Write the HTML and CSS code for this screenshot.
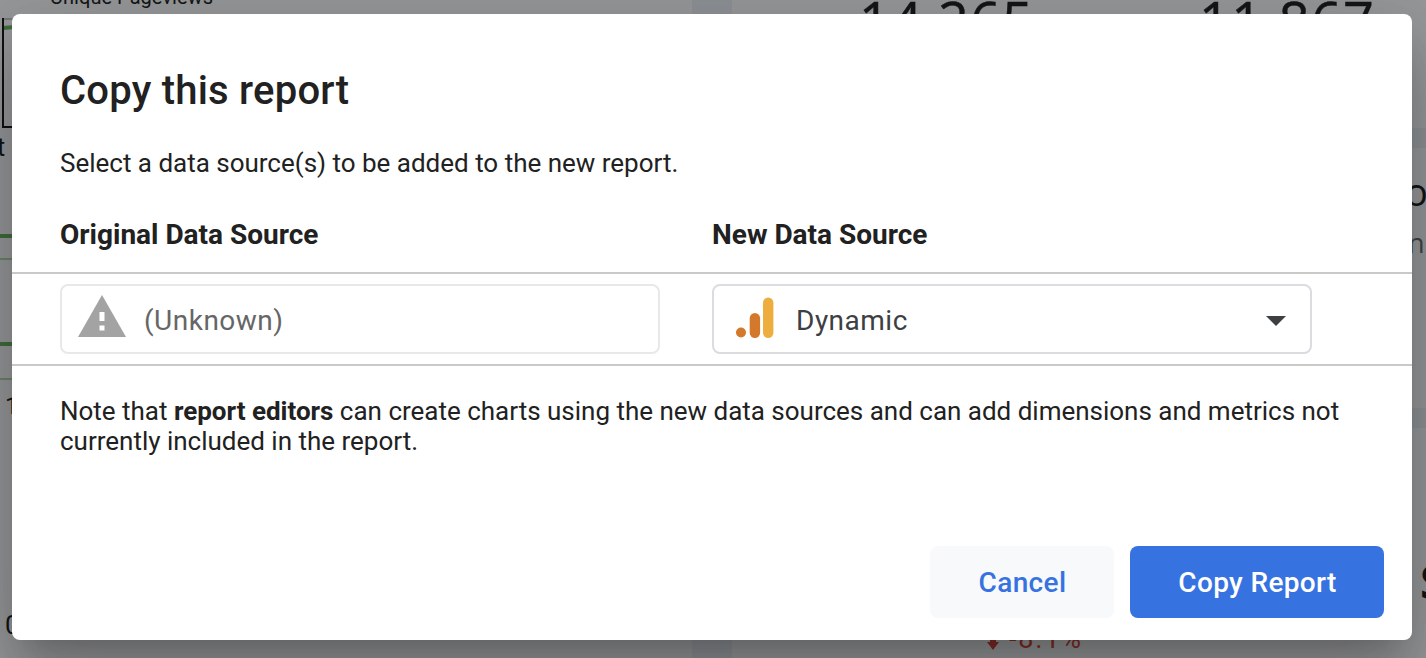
FILE: index.html
```html
<!DOCTYPE html>
<html lang="en">
<head>
<meta charset="utf-8">
<title>Copy this report</title>
<link rel="stylesheet" href="styles.css">
</head>
<body>
<svg class="report" width="1426" height="658" viewBox="0 0 1426 658" aria-hidden="true">
  <path class="gutter" d="M692 0h40v658h-40zM1400 128h26v20h-26zM1400 408h26v20h-26z"/>
  <text class="label" x="50" y="4" font-size="20" textLength="163">Unique Pageviews</text>
  <path class="grid" d="M4 19h20"/>
  <path class="spark" d="M3 28l12-1"/>
  <path class="frame" d="M3 18v109h20"/>
  <text class="label" x="-3" y="156" font-size="25">t</text>
  <path class="spark" d="M0 236h20M0 344h20"/>
  <path class="thin" d="M0 259h20M0 379h20"/>
  <text class="label" x="5" y="414" font-size="24">1</text>
  <text class="label" x="5" y="634" font-size="26">0</text>
  <text class="metric" x="859" y="41" textLength="174">14,265</text>
  <text class="metric" x="1199" y="41" textLength="175">11,867</text>
  <text class="side" x="1405" y="206" font-size="38">o</text>
  <text class="side muted" x="1408" y="253" font-size="27">n</text>
  <text class="side bold" x="1420" y="599" font-size="46">S</text>
  <path class="down" d="M990 638h6v4h3l-6 8-6-8h3z"/>
  <text class="change" x="1009" y="648" textLength="72">-8.1%</text>
</svg>
<main class="dialog" role="dialog" aria-labelledby="title">
  <h1 class="title" id="title">Copy this report</h1>
  <p class="intro">Select a data source(s) to be added to the new report.</p>
  <div class="columns headings">
    <h2 class="heading">Original Data Source</h2>
    <h2 class="heading">New Data Source</h2>
  </div>
  <div class="columns sources">
    <div class="field disabled">
      <svg class="warning" width="48" height="42" viewBox="0 0 48 42"><path fill="#a3a3a3" d="M24 0l24 42H0z"/><path fill="#fff" d="M21.500 17h5v9h-5zM21.500 30.500h5v5h-5z"/></svg>
      <span class="name">(Unknown)</span>
    </div>
    <div class="field">
      <svg class="analytics" width="38" height="41" viewBox="0 0 38 41"><circle cx="5" cy="35.500" r="5" fill="#d4782b"/><rect x="13.700" y="16" width="10.400" height="25" rx="5.200" fill="#d4782b"/><rect x="27" y="0.500" width="10.400" height="40.500" rx="5.200" fill="#eeae3f"/></svg>
      <span class="name">Dynamic</span>
      <svg class="arrow" width="20" height="10" viewBox="0 0 20 10"><path fill="#3c4043" d="M0 0h20L10 10z"/></svg>
    </div>
  </div>
  <p class="note">Note that <b>report editors</b> can create charts using the new data sources and can add dimensions and metrics not currently included in the report.</p>
  <div class="actions">
    <button class="button cancel">Cancel</button>
    <button class="button copy">Copy Report</button>
  </div>
</main>
</body>
</html>
```
FILE: styles.css
```css
* { box-sizing: border-box; }

body {
  margin: 0;
  height: 658px;
  padding: 14px 14px 18px 12px;
  overflow: hidden;
  background: #98999b;
  color: #212121;
  font-family: Roboto, "Liberation Sans", sans-serif;
}

/* Report canvas behind the dialog */
.report { position: absolute; top: 0; left: 0; }
.gutter { fill: #8f9397; }
.grid { stroke: #77787a; stroke-width: 2; }
.spark { fill: none; stroke: #406d3c; stroke-width: 4; }
.thin { stroke: #6e846d; stroke-width: 2; }
.frame { fill: none; stroke: #111; stroke-width: 2; }
.label { fill: #151515; }
.metric, .side { font-family: "Open Sans", "Noto Sans", sans-serif; fill: #141617; }
.metric { font-size: 54px; stroke: #141617; stroke-width: .5px; }
.muted { fill: #434446; }
.bold { font-weight: 700; }
.down { fill: #842f28; }
.change { fill: #842f28; font-size: 27px; }

.dialog {
  position: relative;
  display: flex;
  flex-direction: column;
  height: 626px;
  background: #fff;
  border-radius: 8px;
  box-shadow: 0 22px 30px -14px rgba(0, 0, 0, .2), 0 48px 76px 6px rgba(0, 0, 0, .14), 0 18px 92px 16px rgba(0, 0, 0, .12);
}

.title { margin: 53px 48px 0; font-size: 40px; font-weight: 500; line-height: 48px; letter-spacing: .22px; }
.intro { margin: 33px 48px 0; font-size: 26px; line-height: 30px; letter-spacing: -.01px; }
.columns { display: grid; grid-template-columns: 600px 600px; column-gap: 52px; padding: 0 48px; }
.headings { height: 94px; padding-top: 40px; }
.heading { margin: 0; font-size: 28px; font-weight: 700; line-height: 33px; }
.sources { height: 94px; padding-top: 10px; border-top: 2px solid #c9c9c9; border-bottom: 2px solid #c9c9c9; }

.field {
  display: flex;
  align-items: center;
  height: 70px;
  padding: 0 24px 0 22px;
  border: 2px solid #dadce0;
  border-radius: 8px;
  color: #3c4043;
  font-size: 28px;
  letter-spacing: .5px;
}
.disabled { padding-left: 16px; border-color: #e8e8e8; color: #666; }
.warning { margin: -6px 18px 0 0; }
.analytics { margin: -3px 22px 0 0; }
.name { line-height: 34px; padding-top: 3px; }
.arrow { margin: 4px 0 0 auto; }

.note { margin: 30px 48px 0; font-size: 26px; line-height: 30px; letter-spacing: -.01px; }
.actions { display: flex; justify-content: flex-end; gap: 16px; margin: auto 28px 22px; }
.button {
  height: 72px;
  padding: 2px 0 0 1px;
  border: 0;
  border-radius: 8px;
  font: 500 28px/34px Roboto, "Liberation Sans", sans-serif;
  letter-spacing: .35px;
}
.cancel { width: 184px; background: #f8f9fb; color: #3672e0; }
.copy { width: 254px; background: #3672e0; color: #fff; }
```
